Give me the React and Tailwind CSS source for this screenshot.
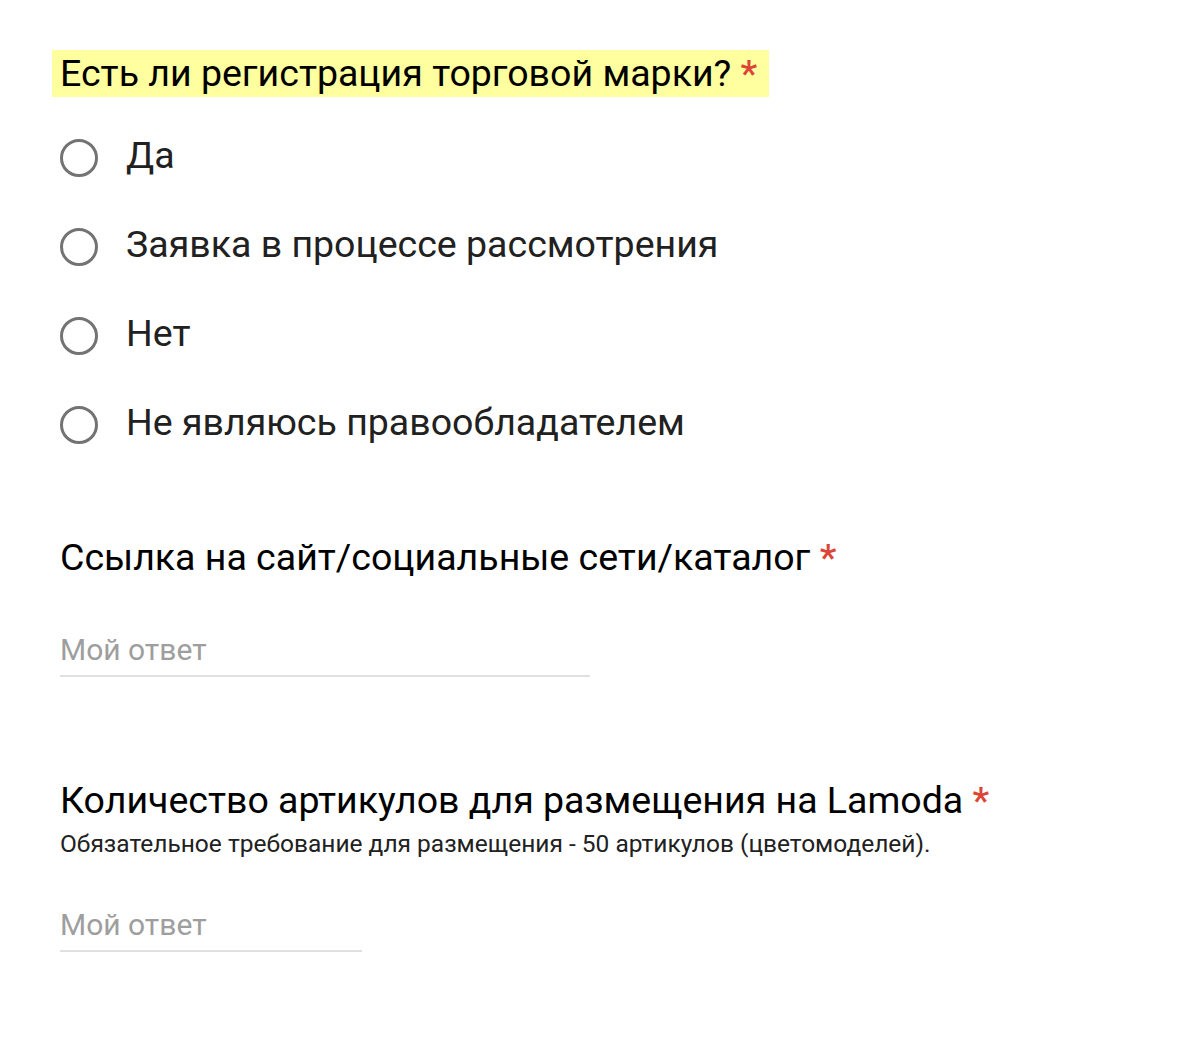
import React from 'react';

const options = ['Да', 'Заявка в процессе рассмотрения', 'Нет', 'Не являюсь правообладателем'];

function Required() {
  return <span className="font-medium text-[#db4437]"> *</span>;
}

function AnswerField({ width }) {
  return (
    <div className={`ml-2 border-b-2 border-[#e0e0e0] pb-[5px] text-[30px] leading-[40px] text-[#9e9e9e] ${width}`}>
      Мой ответ
    </div>
  );
}

export default function App() {
  return (
    <div className="min-h-[1049px] bg-white pl-[52px] pt-[50px] font-['Roboto','Liberation_Sans',sans-serif] text-[#202124]">
      {/* question 1, highlighted */}
      <div>
        <span className="inline-block bg-[#ffff9f] pl-2 pr-[12px] text-[37.5px] leading-[47px] text-black">
          Есть ли регистрация торговой марки?<Required />
        </span>
      </div>

      <div className="ml-2 mt-4">
        {options.map((label) => (
          <label key={label} className="flex h-[89px] cursor-pointer items-center gap-[28px]">
            <span className="h-[38px] w-[38px] shrink-0 rounded-full border-[3px] border-[#737373]" />
            <span className="pb-[4px] text-[37.5px] leading-[47px] text-[#212121]">{label}</span>
          </label>
        ))}
      </div>

      {/* question 2 */}
      <div className="ml-2 mt-[65px] text-[37.5px] leading-[47px] text-black">
        Ссылка на сайт/социальные сети/каталог<Required />
      </div>
      <div className="mt-[49px]">
        <AnswerField width="w-[530px]" />
      </div>

      {/* question 3 */}
      <div className="ml-2 mt-[100px] text-[37.5px] leading-[47px] text-black">
        Количество артикулов для размещения на Lamoda<Required />
      </div>
      <div className="ml-2 mt-[5px] text-[24.5px] leading-[30px] text-[#212121]">
        Обязательное требование для размещения - 50 артикулов (цветомоделей).
      </div>
      <div className="mt-[46px]">
        <AnswerField width="w-[302px]" />
      </div>
    </div>
  );
}
